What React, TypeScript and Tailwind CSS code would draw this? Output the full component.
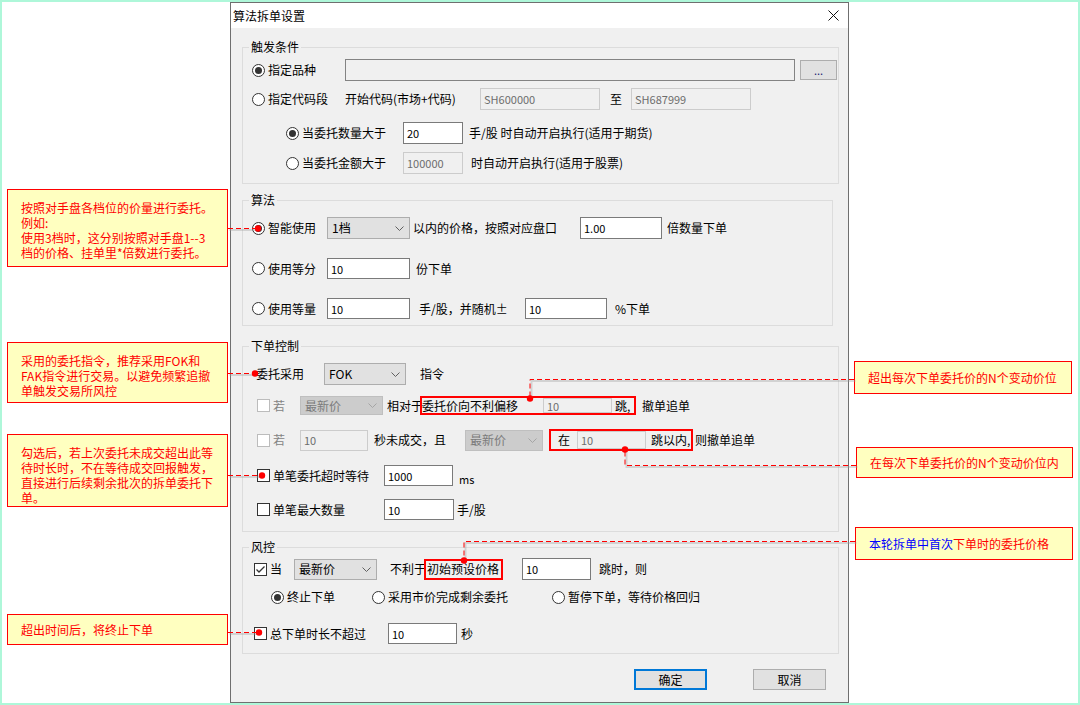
import React from 'react'

// shared bits for the dialog controls
function Radio({ checked = false }: { checked?: boolean }) {
  return (
    <span className="w-[13px] h-[13px] shrink-0 rounded-full border border-[#333333] bg-white flex items-center justify-center">
      {checked && <span className="w-[7px] h-[7px] rounded-full bg-[#333333]" />}
    </span>
  )
}

function Check({ checked = false, disabled = false }: { checked?: boolean; disabled?: boolean }) {
  return (
    <span
      className={`w-[13px] h-[13px] shrink-0 border bg-white flex items-center justify-center ${
        disabled ? 'border-[#bcbcbc]' : 'border-[#333333]'
      }`}
    >
      {checked && (
        <svg width="11" height="11" viewBox="0 0 11 11">
          <path d="M1.5 5.5 L4 8 L9.5 2.5" fill="none" stroke="#333333" strokeWidth="1.3" />
        </svg>
      )}
    </span>
  )
}

function Field({ value = '', className = '', disabled = false, readOnly = false }: { value?: string; className?: string; disabled?: boolean; readOnly?: boolean }) {
  const look = disabled
    ? 'bg-[#f0f0f0] border-[#cccccc] text-[#6d6d6d]'
    : readOnly
    ? 'bg-[#f0f0f0] border-[#838383] text-black'
    : 'bg-white border-[#7a7a7a] text-black'
  return (
    <div className={`${className} shrink-0 flex items-center pl-[3px] border text-[11px] leading-[14px] ${look}`}>
      {value}
    </div>
  )
}

function Select({ value, className = '', disabled = false }: { value: string; className?: string; disabled?: boolean }) {
  return (
    <div
      className={`${className} shrink-0 flex items-center justify-between pl-[4px] pr-[5px] border ${
        disabled ? 'bg-[#cccccc] border-[#bfbfbf] text-[#7b7b7b]' : 'bg-[#e1e1e1] border-[#adadad] text-black'
      }`}
    >
      <span className="text-[12px] leading-[16px]">{value}</span>
      <svg width="9" height="5" viewBox="0 0 9 5">
        <path d="M0.5 0.5 L4.5 4.5 L8.5 0.5" fill="none" stroke={disabled ? '#a5a5a5' : '#606060'} />
      </svg>
    </div>
  )
}

function Group({ title, className = '', children }: { title: string; className?: string; children: React.ReactNode }) {
  return (
    <fieldset className={`${className} border border-[#dcdcdc] shrink-0`}>
      <legend className="ml-[6px] px-[2px] text-[12px] leading-[16px]">{title}</legend>
      {children}
    </fieldset>
  )
}

function Note({ className = '', children }: { className?: string; children: React.ReactNode }) {
  return (
    <div className={`${className} shrink-0 bg-[#ffffc0] border border-[#ff0000] text-[#ff0000] text-[12px] leading-[15px]`}>
      {children}
    </div>
  )
}

function Dialog() {
  return (
    <div className="w-[619px] h-full shrink-0 border border-[#6f6f6f] bg-[#f0f0f0] flex flex-col text-[12px] leading-[16px] text-black">
      <div className="h-[25px] bg-white flex items-center justify-between pl-[2px] pr-[9px]">
        <span className="text-[12px]">算法拆单设置</span>
        <svg width="11" height="11" viewBox="0 0 11 11">
          <path d="M0.5 0.5 L10.5 10.5 M10.5 0.5 L0.5 10.5" stroke="#111111" strokeWidth="1" />
        </svg>
      </div>

      <div className="flex-1 flex flex-col pl-[11px]">
        {/* 触发条件 */}
        <Group title="触发条件" className="w-[597px] mt-[11px] pb-[9px]">
          <div className="flex items-center h-[22px] mt-[4px] pl-[9px]">
            <div className="w-[93px] flex items-center gap-[3px]">
              <Radio checked />
              <span>指定品种</span>
            </div>
            <Field readOnly className="w-[450px] h-[22px]" />
            <div className="ml-[5px] w-[37px] h-[20px] bg-[#e1e1e1] border border-[#adadad] flex items-center justify-center text-[11px] text-[#1a1a6e]">
              ...
            </div>
          </div>
          <div className="flex items-center h-[22px] mt-[7px] pl-[9px]">
            <div className="w-[93px] flex items-center gap-[3px]">
              <Radio />
              <span>指定代码段</span>
            </div>
            <span className="w-[135px]">开始代码(市场+代码)</span>
            <Field disabled value="SH600000" className="w-[120px] h-[22px]" />
            <span className="w-[31px] pl-[10px]">至</span>
            <Field disabled value="SH687999" className="w-[120px] h-[22px]" />
          </div>
          <div className="flex items-center h-[22px] mt-[12px] pl-[43px]">
            <div className="w-[117px] flex items-center gap-[3px]">
              <Radio checked />
              <span>当委托数量大于</span>
            </div>
            <Field value="20" className="w-[60px] h-[22px]" />
            <span className="ml-[6px]">手/股 时自动开启执行(适用于期货)</span>
          </div>
          <div className="flex items-center h-[22px] mt-[8px] pl-[43px]">
            <div className="w-[117px] flex items-center gap-[3px]">
              <Radio />
              <span>当委托金额大于</span>
            </div>
            <Field disabled value="100000" className="w-[60px] h-[22px]" />
            <span className="ml-[8px]">时自动开启执行(适用于股票)</span>
          </div>
        </Group>

        {/* 算法 */}
        <Group title="算法" className="w-[591px] mt-[8px] pb-[6px]">
          <div className="flex items-center h-[22px] mt-[9px] pl-[9px]">
            <div className="w-[75px] flex items-center gap-[3px]">
              <Radio checked />
              <span>智能使用</span>
            </div>
            <Select value="1档" className="w-[83px] h-[22px]" />
            <span className="ml-[3px] w-[167px]">以内的价格，按照对应盘口</span>
            <Field value="1.00" className="w-[82px] h-[22px]" />
            <span className="ml-[5px]">倍数量下单</span>
          </div>
          <div className="flex items-center h-[21px] mt-[19px] pl-[9px]">
            <div className="w-[75px] flex items-center gap-[3px]">
              <Radio />
              <span>使用等分</span>
            </div>
            <Field value="10" className="w-[83px] h-[21px]" />
            <span className="ml-[6px]">份下单</span>
          </div>
          <div className="flex items-center h-[21px] mt-[19px] pl-[9px]">
            <div className="w-[75px] flex items-center gap-[3px]">
              <Radio />
              <span>使用等量</span>
            </div>
            <Field value="10" className="w-[83px] h-[21px]" />
            <span className="ml-[9px] w-[106px]">手/股，并随机±</span>
            <Field value="10" className="w-[82px] h-[21px]" />
            <span className="ml-[8px]">%下单</span>
          </div>
        </Group>

        {/* 下单控制 */}
        <Group title="下单控制" className="w-[597px] mt-[12px] pb-[11px]">
          <div className="flex items-center h-[22px] mt-[9px] pl-[13px]">
            <span className="w-[68px]">委托采用</span>
            <Select value="FOK" className="w-[82px] h-[22px]" />
            <span className="ml-[14px]">指令</span>
          </div>
          <div className="flex items-center h-[19px] mt-[11px] pl-[14px]">
            <Check disabled />
            <span className="ml-[3px] w-[27px] text-[#838383]">若</span>
            <Select disabled value="最新价" className="w-[83px] h-[19px]" />
            <span className="ml-[4px] w-[33px] whitespace-nowrap">相对于</span>
            <div className="w-[216px] h-[19px] border-2 border-[#ff0000] flex items-center">
              <span className="w-[121px] shrink-0 whitespace-nowrap">委托价向不利偏移</span>
              <Field disabled value="10" className="w-[69px] h-full" />
              <span className="ml-[3px] whitespace-nowrap">跳,</span>
            </div>
            <span className="ml-[6px]">撤单追单</span>
          </div>
          <div className="flex items-center h-[22px] mt-[14px] pl-[14px]">
            <Check disabled />
            <span className="ml-[3px] w-[27px] text-[#838383]">若</span>
            <Field disabled value="10" className="w-[68px] h-[21px]" />
            <span className="ml-[6px] w-[91px]">秒未成交，且</span>
            <Select disabled value="最新价" className="w-[78px] h-[21px]" />
            <div className="ml-[6px] w-[144px] h-[22px] border-2 border-[#ff0000] flex items-center">
              <span className="w-[26px] shrink-0 text-center">在</span>
              <Field disabled value="10" className="w-[69px] h-full" />
              <span className="ml-[5px] whitespace-nowrap">跳以内,</span>
            </div>
            <span className="ml-[2px]">则撤单追单</span>
          </div>
          <div className="flex items-center h-[21px] mt-[14px] pl-[14px]">
            <Check />
            <span className="ml-[3px] w-[111px]">单笔委托超时等待</span>
            <Field value="1000" className="w-[69px] h-[21px]" />
            <span className="ml-[6px] mt-[6px] text-[11px]">ms</span>
          </div>
          <div className="flex items-center h-[21px] mt-[13px] pl-[14px]">
            <Check />
            <span className="ml-[3px] w-[111px]">单笔最大数量</span>
            <Field value="10" className="w-[70px] h-[21px]" />
            <span className="ml-[3px]">手/股</span>
          </div>
        </Group>

        {/* 风控 */}
        <Group title="风控" className="w-[597px] mt-[7px] pb-[9px]">
          <div className="flex items-center h-[22px] mt-[3px] pl-[11px]">
            <Check checked />
            <span className="ml-[3px] w-[24px]">当</span>
            <Select value="最新价" className="w-[83px] h-[21px]" />
            <span className="ml-[13px] w-[34px] whitespace-nowrap">不利于</span>
            <div className="w-[79px] h-[21px] border-2 border-[#ff0000] flex items-center pl-[1px] overflow-hidden whitespace-nowrap">
              初始预设价格
            </div>
            <Field value="10" className="ml-[19px] w-[69px] h-[22px]" />
            <span className="ml-[8px]">跳时，则</span>
          </div>
          <div className="flex items-center h-[14px] mt-[10px] pl-[28px]">
            <div className="w-[101px] flex items-center gap-[3px]">
              <Radio checked />
              <span>终止下单</span>
            </div>
            <div className="w-[180px] flex items-center gap-[3px]">
              <Radio />
              <span>采用市价完成剩余委托</span>
            </div>
            <div className="flex items-center gap-[3px]">
              <Radio />
              <span>暂停下单，等待价格回归</span>
            </div>
          </div>
          <div className="flex items-center h-[21px] mt-[19px] pl-[11px]">
            <Check />
            <span className="ml-[3px] w-[118px]">总下单时长不超过</span>
            <Field value="10" className="w-[69px] h-[21px]" />
            <span className="ml-[4px]">秒</span>
          </div>
        </Group>

        <div className="flex mt-[15px] pl-[392px] gap-[46px]">
          <div className="w-[73px] h-[21px] bg-[#e1e1e1] border-2 border-[#0078d7] flex items-center justify-center">确定</div>
          <div className="w-[73px] h-[21px] bg-[#e1e1e1] border border-[#adadad] flex items-center justify-center">取消</div>
        </div>
      </div>
    </div>
  )
}

// dashed callout leaders, in page coordinates
const leaders: { pts: [number, number][]; dot: [number, number] }[] = [
  { pts: [[228, 228], [258, 228]], dot: [258, 228] },
  { pts: [[228, 373], [255, 373]], dot: [255, 373] },
  { pts: [[228, 475], [262, 475]], dot: [262, 475] },
  { pts: [[228, 632], [259, 632]], dot: [259, 632] },
  { pts: [[854, 379], [530, 379], [530, 398]], dot: [530, 398] },
  { pts: [[856, 465], [625, 465], [625, 449]], dot: [625, 449] },
  { pts: [[855, 541], [464, 541], [464, 560]], dot: [464, 560] },
]

export default function App() {
  return (
    <div className="w-[1080px] h-[705px] border-2 border-[#aef7d9] bg-white flex relative overflow-hidden font-['Noto_Sans_CJK_SC','Noto_Sans',sans-serif]">
      <div className="w-[228px] shrink-0 flex flex-col">
        <Note className="ml-[5px] mt-[187px] w-[221px] h-[78px] pt-[10px] pl-[13px]">
          <div>按照对手盘各档位的价量进行委托。</div>
          <div>例如:</div>
          <div className="whitespace-nowrap">使用3档时，这分别按照对手盘1--3</div>
          <div>档的价格、挂单里*倍数进行委托。</div>
        </Note>
        <Note className="ml-[5px] mt-[75px] w-[221px] h-[61px] pt-[10px] pl-[13px]">
          <div className="whitespace-nowrap">采用的委托指令，推荐采用FOK和</div>
          <div className="whitespace-nowrap">FAK指令进行交易。以避免频繁追撤</div>
          <div>单触发交易所风控</div>
        </Note>
        <Note className="ml-[5px] mt-[31px] w-[221px] h-[73px] pt-[10px] pl-[13px]">
          <div className="whitespace-nowrap">勾选后，若上次委托未成交超出此等</div>
          <div className="whitespace-nowrap">待时长时，不在等待成交回报触发，</div>
          <div className="whitespace-nowrap">直接进行后续剩余批次的拆单委托下</div>
          <div>单。</div>
        </Note>
        <Note className="ml-[5px] mt-[107px] w-[221px] h-[31px] pt-[7px] pl-[13px]">
          <div>超出时间后，将终止下单</div>
        </Note>
      </div>

      <Dialog />

      <div className="flex-1 flex flex-col">
        <Note className="ml-[5px] mt-[359px] w-[218px] h-[33px] pl-[13px] flex items-center">
          超出每次下单委托价的N个变动价位
        </Note>
        <Note className="ml-[7px] mt-[53px] w-[217px] h-[31px] pl-[13px] flex items-center">
          在每次下单委托价的N个变动价位内
        </Note>
        <Note className="ml-[6px] mt-[49px] w-[218px] h-[33px] pl-[13px] flex items-center">
          <span className="text-[#0000ff]">本轮拆单中首次</span>
          <span>下单时的委托价格</span>
        </Note>
      </div>

      <svg className="absolute left-[-2px] top-[-2px] pointer-events-none" width="1080" height="705" viewBox="0 0 1080 705">
        {leaders.map((l, i) => {
          const d = l.pts.map((p, j) => `${j ? 'L' : 'M'}${p[0]} ${p[1] + 0.5}`).join(' ')
          const sd = l.pts.map((p, j) => `${j ? 'L' : 'M'}${p[0] + 1.5} ${p[1] + 2}`).join(' ')
          return (
            <g key={i}>
              <path d={sd} fill="none" stroke="#9a9a9a" strokeOpacity="0.35" strokeWidth="2" />
              <path d={d} fill="none" stroke="#ff0000" strokeWidth="1" strokeDasharray="5 3" />
              <circle cx={l.dot[0]} cy={l.dot[1] + 0.5} r="3.2" fill="#ff0000" />
            </g>
          )
        })}
      </svg>
    </div>
  )
}
